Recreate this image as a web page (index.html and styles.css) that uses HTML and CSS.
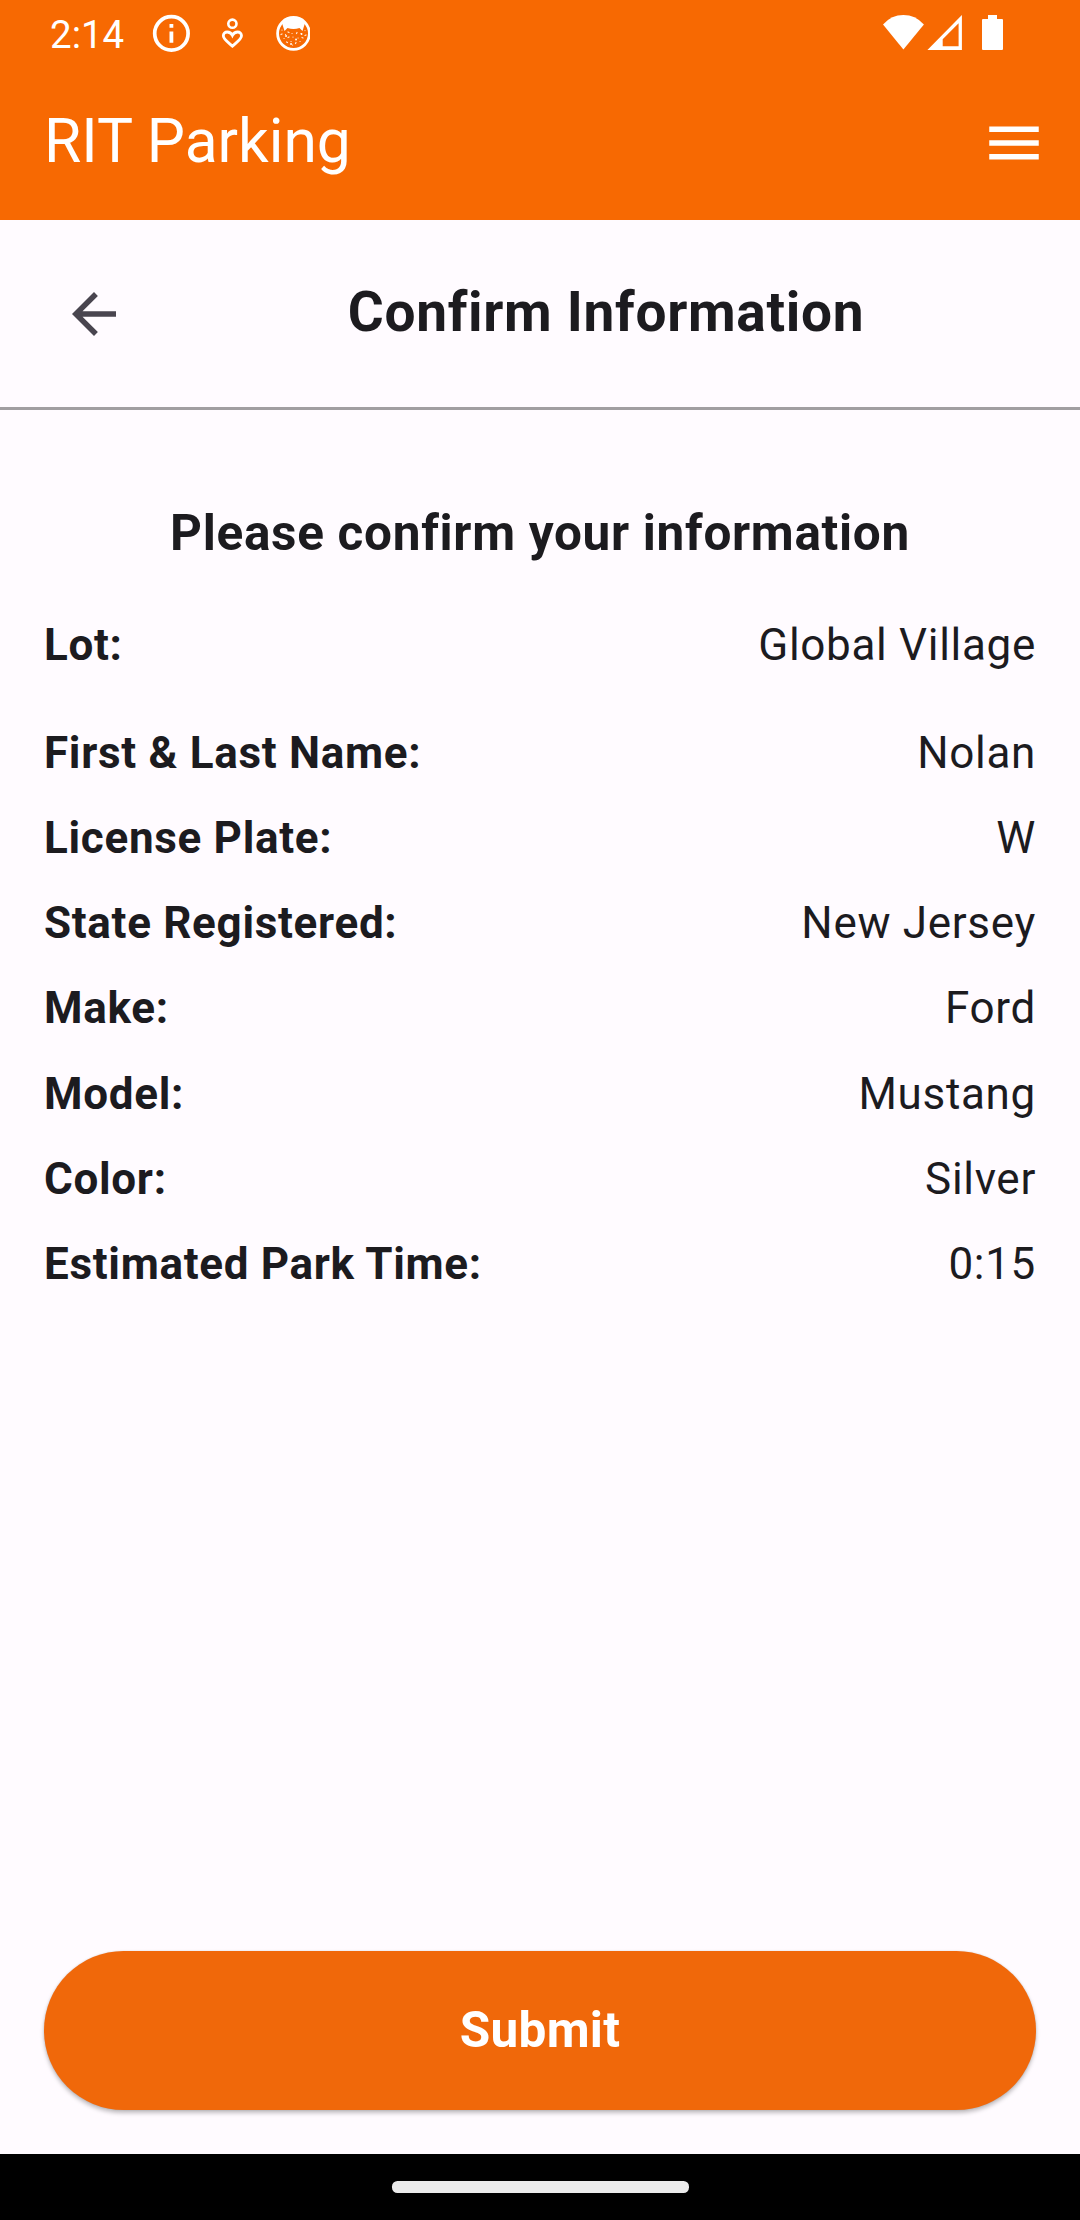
FILE: index.html
```html
<!DOCTYPE html>
<html lang="en">
<head>
<meta charset="utf-8">
<title>RIT Parking</title>
<link rel="stylesheet" href="styles.css">
</head>
<body>
<div class="screen">
  <header class="app-bar">
    <div class="status-bar">
      <span class="clock">2:14</span>
      <svg class="status-left" width="160" height="66" viewBox="150 0 160 66" fill="none" stroke="#fff">
        <circle cx="171.4" cy="33.4" r="16.7" stroke-width="3.7"/>
        <path d="M169.5 24h3.8v3.7h-3.8zM169.5 31.6h3.8v11.1h-3.8z" fill="#fff" stroke="none"/>
        <circle cx="232.4" cy="23.7" r="4.1" stroke-width="2.6"/>
        <path d="M232.4 46.2C228 42.2 223.3 39.2 223.3 35.8C223.3 33.6 225 32 227.2 32C229.6 32 231.3 33.3 232.4 35.4C233.5 33.3 235.2 32 237.6 32C239.8 32 241.5 33.6 241.5 35.8C241.5 39.2 236.8 42.2 232.4 46.2Z" stroke-width="2.8"/>
        <circle cx="293.5" cy="33.4" r="15.9" stroke-width="2.8"/>
        <path d="M282 23C287 16 300 16 305 23L302.5 31L299.5 28Q293.5 30 287.5 28L284.5 31Z" fill="#fff" stroke="none"/>
        <g stroke-width="1.2" stroke-linecap="round" opacity=".85">
          <path d="M282 30v.1M281 34.5l1-.5M285.5 34.5h.1M288 32l1 .5M292 33.5h.1M297 32.5l-.5 1M301 33.5h.1M305 30.5v.1M306 35l-1 .5M284 38.5h.1M288 37.5l1-.5M293 37v.1M298 38h.1M302 37.5l1 .5M286.5 42l1 .5M291 41.5h.1M296 42.5l-.5 1M300 41.5h.1M292.5 45h.1"/>
        </g>
        <path d="M286 36h.1M296 39.5h.1M301.5 34h.1M291 44h.1" stroke-width="1.8" stroke-linecap="round"/>
      </svg>
      <svg class="status-right" width="124" height="66" viewBox="880 0 124 66" fill="#fff">
        <path d="M903.4 49.4L883 24.4Q891.5 15 903.4 15T923.9 24.4Z"/>
        <path fill-rule="evenodd" d="M927.4 50L961.9 15V50ZM942.7 39.2V46.3H958.6V23.3Z"/>
        <path d="M988 15h9v4h5q1 0 1 1v29q0 1-1 1h-19q-1 0-1-1v-29q0-1 1-1h5z"/>
      </svg>
    </div>
    <div class="toolbar">
      <h1 class="app-title">RIT Parking</h1>
      <svg class="icon" viewBox="0 0 24 24" fill="#fff"><path d="M3 18h18v-2H3v2zm0-5h18v-2H3v2zm0-7v2h18V6H3z"/></svg>
    </div>
  </header>
  <div class="page-head">
    <svg class="icon" viewBox="0 0 24 24" fill="#49454f"><path d="M20 11H7.830l5.590-5.590L12 4l-8 8 8 8 1.410-1.410L7.830 13H20v-2z"/></svg>
    <h2 class="page-title">Confirm Information</h2>
  </div>
  <main class="content">
    <h3 class="prompt">Please confirm your information</h3>
    <dl class="details">
      <div class="row row-lot"><dt>Lot:</dt><dd>Global Village</dd></div>
      <div class="row"><dt>First &amp; Last Name:</dt><dd>Nolan</dd></div>
      <div class="row"><dt>License Plate:</dt><dd>W</dd></div>
      <div class="row"><dt>State Registered:</dt><dd>New Jersey</dd></div>
      <div class="row"><dt>Make:</dt><dd>Ford</dd></div>
      <div class="row"><dt>Model:</dt><dd>Mustang</dd></div>
      <div class="row"><dt>Color:</dt><dd>Silver</dd></div>
      <div class="row"><dt>Estimated Park Time:</dt><dd>0:15</dd></div>
    </dl>
    <button class="submit" type="button">Submit</button>
  </main>
  <footer class="nav-bar"><div class="nav-handle"></div></footer>
</div>
</body>
</html>
```
FILE: styles.css
```css
* { box-sizing: border-box; margin: 0; padding: 0; }

body {
  background: #fffbff;
  color: #1c1b1f;
  font-family: Roboto, "Liberation Sans", sans-serif;
}

.screen {
  display: flex;
  flex-direction: column;
  width: 1080px;
  height: 2220px;
  overflow: hidden;
}

.app-bar { background: #f76902; color: #fff; height: 220px; }

.status-bar {
  display: flex;
  align-items: center;
  height: 66px;
  padding: 0 76px 0 50px;
}
.clock { width: 100px; font-size: 38.5px; line-height: 66px; padding-top: 3px; }
.status-left, .status-right { display: block; flex: none; }
.status-right { margin-left: auto; }

.toolbar {
  display: flex;
  align-items: center;
  justify-content: space-between;
  height: 154px;
  padding: 0 33px 0 44px;
}
.app-title { padding-bottom: 4px; font-size: 60.5px; font-weight: 400; line-height: 77px; }
.icon { display: block; flex: none; width: 66px; height: 66px; }

.page-head {
  display: flex;
  align-items: center;
  height: 190px;
  padding: 0 28px 0 61px;
  border-bottom: 3px solid #a19ea1;
}
.page-title {
  flex: 1;
  padding: 0 0 4px 33px;
  font-size: 55px;
  font-weight: 700;
  line-height: 66px;
  letter-spacing: 0.6875px;
  text-align: center;
}

.content {
  display: flex;
  flex: 1;
  flex-direction: column;
  padding: 89px 44px 44px;
}
.prompt {
  font-size: 49.5px;
  font-weight: 700;
  line-height: 68px;
  letter-spacing: 0.6875px;
  text-align: center;
}
.details {
  display: flex;
  flex-direction: column;
  gap: 19.25px;
  padding-top: 45px;
}
.row {
  display: flex;
  justify-content: space-between;
  font-size: 44px;
  line-height: 66px;
  letter-spacing: 0.6875px;
}
.row dt { font-weight: 700; }
.row-lot { margin-bottom: 22.35px; }

.submit {
  height: 159.5px;
  margin-top: auto;
  border: 0;
  border-radius: 80px;
  background: #f0680a;
  box-shadow: 0 3px 4px rgba(0, 0, 0, 0.25), 0 0 2px rgba(0, 0, 0, 0.12);
  color: #fff;
  font: 700 49.5px/60px Roboto, "Liberation Sans", sans-serif;
  letter-spacing: 0.275px;
}

.nav-bar {
  display: flex;
  align-items: center;
  justify-content: center;
  height: 66px;
  background: #000;
}
.nav-handle { width: 297px; height: 11.5px; border-radius: 5.5px; background: #ebebeb; }
```
